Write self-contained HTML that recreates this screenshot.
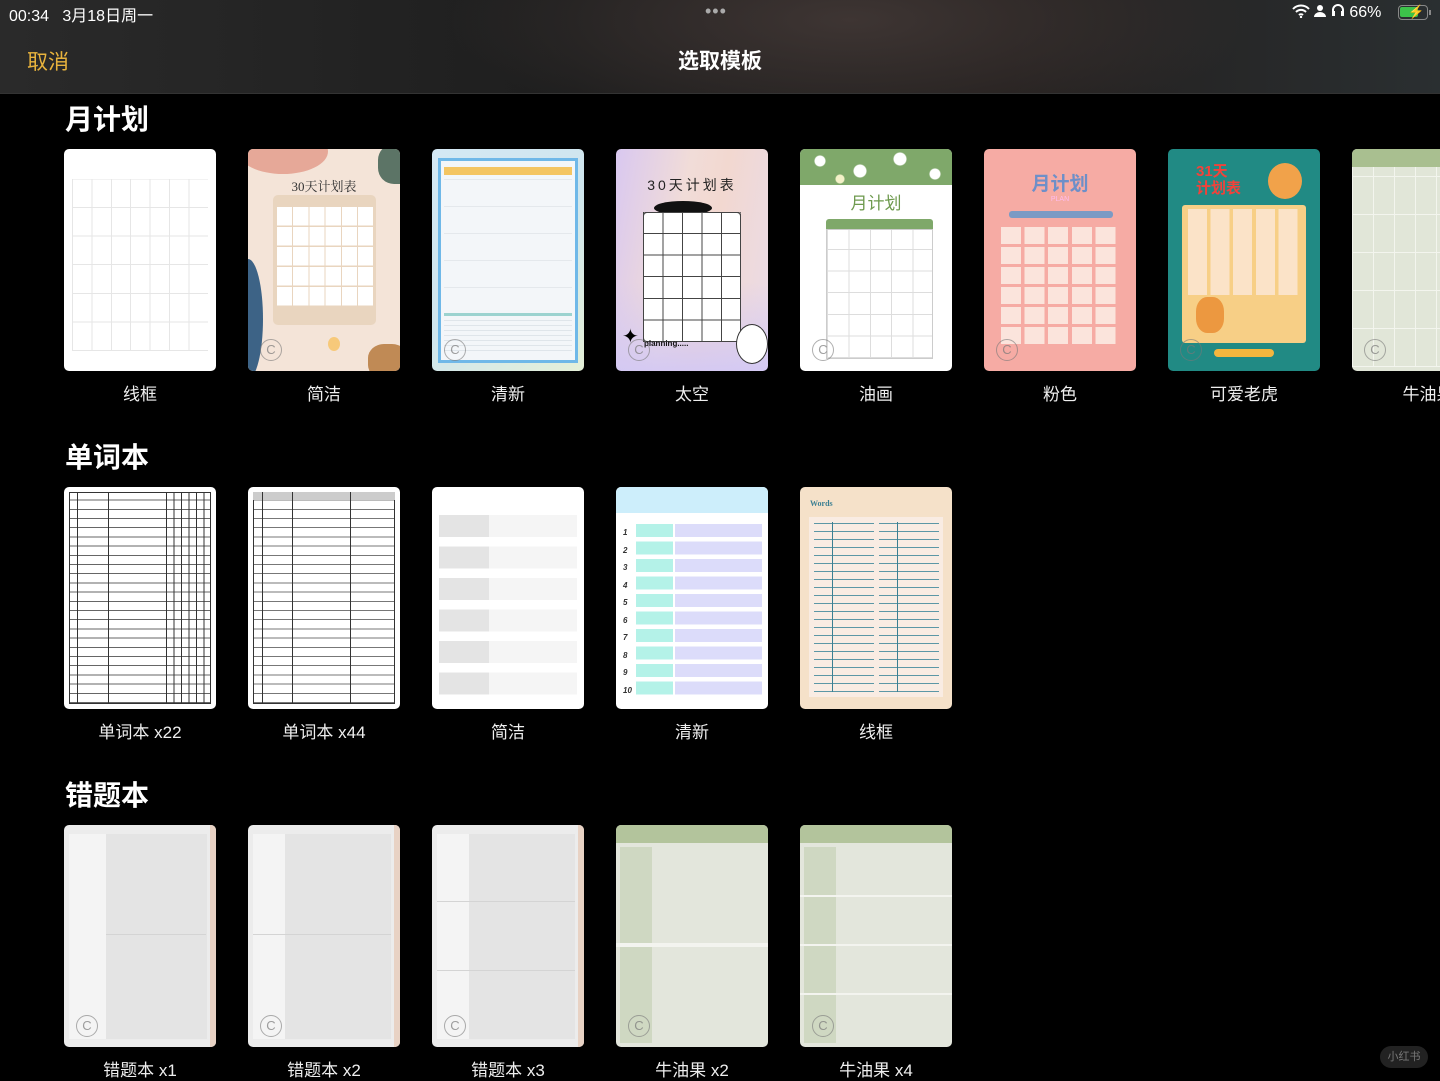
<!DOCTYPE html>
<html><head><meta charset="utf-8"><style>
*{margin:0;padding:0;box-sizing:border-box}
body{width:1440px;height:1080px;background:#000;overflow:hidden;position:relative;font-family:"Liberation Sans","Noto Sans CJK SC",sans-serif;color:#fff}
.hdr{position:absolute;left:0;top:0;width:1440px;height:94px;background:radial-gradient(ellipse 400px 120px at 850px 20px,#3e3533,transparent),linear-gradient(90deg,#2a2a2a,#1e1e1e 40%,#231f1e 70%,#2a2f31);border-bottom:1px solid #333}
.abs{position:absolute}
.sec{position:absolute;left:65px;font-size:28px;font-weight:bold}
.card{position:absolute;width:152px;height:222px;border-radius:5px;overflow:hidden}
.lbl{position:absolute;width:184px;text-align:center;font-size:17px;color:#eee}
.cp{position:absolute;left:12px;bottom:10px;width:22px;height:22px;border:1.5px solid rgba(120,120,120,.6);border-radius:50%;font-size:13px;line-height:19px;text-align:center;color:rgba(120,120,120,.7)}
.grid{position:absolute}
</style></head><body>
<div class="hdr"></div>
<div class="abs" style="left:9px;top:2px;font-size:16px">00:34&nbsp;&nbsp;&nbsp;3月18日周一</div>
<div class="abs" style="left:705px;top:1px;font-size:18px;letter-spacing:1px;color:#aaa">•••</div>
<div class="abs" style="left:1292px;top:3px;font-size:16px">
<svg width="18" height="14" viewBox="0 0 18 14" style="vertical-align:-1px"><path d="M1 5a11 11 0 0 1 16 0M4 8a7 7 0 0 1 10 0M7 11a3 3 0 0 1 4 0" stroke="#fff" stroke-width="2" fill="none"/><circle cx="9" cy="13" r="1.2" fill="#fff"/></svg>
<svg width="12" height="13" viewBox="0 0 12 13"><circle cx="6" cy="4" r="3" fill="#fff"/><path d="M0 13a6 5 0 0 1 12 0z" fill="#fff"/></svg>
<svg width="14" height="14" viewBox="0 0 14 14"><path d="M2 12V7a5 5 0 0 1 10 0v5" stroke="#fff" stroke-width="2" fill="none"/><rect x="1" y="8" width="3" height="5" fill="#fff"/><rect x="10" y="8" width="3" height="5" fill="#fff"/></svg>
 66%</div>
<div class="abs" style="left:1398px;top:5px;width:30px;height:15px;border:1.5px solid #888;border-radius:4px"><div style="position:absolute;left:1px;top:1px;width:18px;height:10px;background:#3cc24a;border-radius:2px"></div><div style="position:absolute;left:9px;top:-2px;font-size:13px;color:#fff;font-weight:bold">⚡</div></div>
<div class="abs" style="left:1429px;top:10px;width:2px;height:5px;background:#888"></div>
<div class="abs" style="left:27px;top:46px;font-size:21px;color:#e8b33d">取消</div>
<div class="abs" style="left:0;width:1440px;top:45px;text-align:center;font-size:21px;font-weight:bold">选取模板</div>

<div class="sec" style="top:98px">月计划</div>
<div class="sec" style="top:436px">单词本</div>
<div class="sec" style="top:774px">错题本</div>

<!-- Row 1 -->
<div class="card" style="left:64px;top:149px;background:#fff">
<div class="grid" style="left:8px;top:30px;width:136px;height:172px;background:repeating-linear-gradient(90deg,#e6e6e6 0 1px,transparent 1px 19.4px),repeating-linear-gradient(0deg,#e6e6e6 0 1px,transparent 1px 28.6px)"></div></div>
<div class="card" style="left:248px;top:149px;background:#f4e4d8">
<div class="abs" style="left:-10px;top:-20px;width:90px;height:45px;border-radius:50%;background:#e6a898"></div>
<div class="abs" style="left:130px;top:-5px;width:40px;height:40px;border-radius:40%;background:#5c7466"></div>
<div class="abs" style="left:-15px;top:110px;width:30px;height:120px;border-radius:50%;background:#3d6386"></div>
<div class="abs" style="left:120px;top:195px;width:40px;height:35px;border-radius:40%;background:#c08a55"></div>
<div class="abs" style="left:0;width:152px;top:27px;text-align:center;font-family:'Liberation Serif','Noto Serif CJK SC',serif;font-size:13px;color:#333">30天计划表</div>
<div class="abs" style="left:25px;top:46px;width:103px;height:130px;background:#e9d5bf;border-radius:5px"></div>
<div class="abs" style="left:28px;top:58px;width:97px;height:100px;background:repeating-linear-gradient(90deg,#e9d5bf 0 1px,#fff 1px 16.2px),#fff"></div>
<div class="abs" style="left:28px;top:58px;width:97px;height:100px;background:repeating-linear-gradient(0deg,#e9d5bf 0 1.5px,transparent 1.5px 20px)"></div>
<div class="abs" style="left:80px;top:188px;width:12px;height:14px;border-radius:50%;background:#f7c97a"></div>
<div class="cp">C</div></div>
<div class="card" style="left:432px;top:149px;background:linear-gradient(135deg,#d4e8f4,#cfe6ee 50%,#e5f0d8)">
<div class="abs" style="left:6px;top:9px;width:140px;height:205px;border:3px solid #6fb8e8;background:#f3f6f9"></div>
<div class="abs" style="left:12px;top:18px;width:128px;height:8px;background:#f4c562"></div>
<div class="abs" style="left:12px;top:26px;width:128px;height:140px;background:repeating-linear-gradient(0deg,#e4e8ec 0 1px,transparent 1px 27px)"></div>
<div class="abs" style="left:12px;top:164px;width:128px;height:3px;background:#9cd3d0"></div>
<div class="abs" style="left:12px;top:168px;width:128px;height:34px;background:repeating-linear-gradient(0deg,#dfe5ea 0 1px,transparent 1px 5px)"></div>
<div class="cp">C</div></div>
<div class="card" style="left:616px;top:149px;background:linear-gradient(180deg,transparent 60%,rgba(210,200,245,.9)),linear-gradient(100deg,#d9c8f0,#f1dcd8 40%,#f2d8d0 60%,#eadbe8);">
<div class="abs" style="left:0;width:152px;top:26px;text-align:center;font-size:14px;color:#222;letter-spacing:3px">30天计划表</div>
<div class="abs" style="left:38px;top:52px;width:58px;height:14px;border-radius:50%;background:#111"></div>
<div class="abs" style="left:27px;top:63px;width:98px;height:130px;background:#fff;border:1px solid #444;border-radius:4px"></div>
<div class="abs" style="left:27px;top:63px;width:98px;height:130px;background:repeating-linear-gradient(90deg,#444 0 1px,transparent 1px 19.5px),repeating-linear-gradient(0deg,#444 0 1px,transparent 1px 21.6px)"></div>
<div class="abs" style="left:120px;top:175px;width:32px;height:40px;border-radius:50%;background:#fff;border:1px solid #333"></div>
<div class="abs" style="left:28px;top:190px;font-size:8px;color:#111;font-weight:bold">planning.....</div>
<div class="abs" style="left:6px;top:175px;font-size:20px;color:#000">✦</div>
<div class="cp">C</div></div>
<div class="card" style="left:800px;top:149px;background:#fff">
<div class="abs" style="left:0;top:0;width:152px;height:36px;background:radial-gradient(circle at 20px 12px,#fff 5px,transparent 6px),radial-gradient(circle at 60px 22px,#fff 6px,transparent 7px),radial-gradient(circle at 100px 10px,#fff 6px,transparent 7px),radial-gradient(circle at 135px 25px,#fff 5px,transparent 6px),radial-gradient(circle at 40px 30px,#f4f1c8 4px,transparent 5px),#7fa86a"></div>
<div class="abs" style="left:0;width:152px;top:40px;text-align:center;font-size:17px;color:#6e9a4e">月计划</div>
<div class="abs" style="left:26px;top:70px;width:107px;height:10px;background:#7fa86a;border-radius:3px 3px 0 0"></div>
<div class="abs" style="left:26px;top:80px;width:107px;height:130px;border:1px solid #ccc;background:repeating-linear-gradient(90deg,#ddd 0 1px,transparent 1px 21.4px),repeating-linear-gradient(0deg,#ddd 0 1px,transparent 1px 21.6px)"></div>
<div class="cp">C</div></div>
<div class="card" style="left:984px;top:149px;background:#f6aba4">
<div class="abs" style="left:0;width:152px;top:20px;text-align:center;font-size:19px;color:#6e8fc8;font-weight:bold">月计划</div>
<div class="abs" style="left:0;width:152px;top:47px;text-align:center;font-size:7px;color:#fbe">PLAN</div>
<div class="abs" style="left:25px;top:62px;width:104px;height:7px;border-radius:3px;background:#7b9ac4"></div>
<div class="abs" style="left:17px;top:75px;width:118px;height:120px;background:repeating-linear-gradient(90deg,#fbe4dc 0 20px,transparent 20px 23.6px),repeating-linear-gradient(0deg,transparent 0 3px,#f6aba4 3px 4px)"></div>
<div class="abs" style="left:17px;top:75px;width:118px;height:120px;background:repeating-linear-gradient(0deg,transparent 0 17px,#f6aba4 17px 20px)"></div>
<div class="cp">C</div></div>
<div class="card" style="left:1168px;top:149px;background:#218a84">
<div class="abs" style="left:28px;top:14px;font-size:15px;line-height:17px;color:#f2423a;font-weight:bold">31天<br>计划表</div>
<div class="abs" style="left:100px;top:14px;width:34px;height:36px;border-radius:50%;background:#f1a24a"></div>
<div class="abs" style="left:14px;top:56px;width:124px;height:138px;background:#f7cf86;border-radius:3px"></div>
<div class="abs" style="left:20px;top:60px;width:112px;height:86px;background:repeating-linear-gradient(90deg,#fbe3c8 0 19px,transparent 19px 22.6px),repeating-linear-gradient(0deg,transparent 0 13px,#f7cf86 13px 16px)"></div>
<div class="abs" style="left:28px;top:148px;width:28px;height:36px;border-radius:40%;background:#ec9840"></div>
<div class="abs" style="left:46px;top:200px;width:60px;height:8px;border-radius:4px;background:#f5b63e"></div>
<div class="cp">C</div></div>
<div class="card" style="left:1352px;top:149px;background:#e1e6d8">
<div class="abs" style="left:0;top:0;width:152px;height:18px;background:#a9bf90"></div>
<div class="abs" style="left:0;top:18px;width:152px;height:200px;background:repeating-linear-gradient(90deg,#f3f5ee 0 1px,transparent 1px 21px),repeating-linear-gradient(0deg,#f3f5ee 0 1px,transparent 1px 38px)"></div>
<div class="cp">C</div></div>

<div class="lbl" style="left:48px;top:380px">线框</div>
<div class="lbl" style="left:232px;top:380px">简洁</div>
<div class="lbl" style="left:416px;top:380px">清新</div>
<div class="lbl" style="left:600px;top:380px">太空</div>
<div class="lbl" style="left:784px;top:380px">油画</div>
<div class="lbl" style="left:968px;top:380px">粉色</div>
<div class="lbl" style="left:1152px;top:380px">可爱老虎</div>
<div class="lbl" style="left:1336px;top:380px">牛油果</div>

<!-- Row 2 -->
<div class="card" style="left:64px;top:487px;background:#fff">
<div class="abs" style="left:5px;top:5px;width:142px;height:212px;border:1px solid #333;background:repeating-linear-gradient(0deg,#666 0 1px,transparent 1px 9.2px)"></div>
<div class="abs" style="left:13px;top:5px;width:1px;height:212px;background:#333"></div>
<div class="abs" style="left:44px;top:5px;width:1px;height:212px;background:#333"></div>
<div class="abs" style="left:102px;top:5px;width:45px;height:212px;background:repeating-linear-gradient(90deg,#333 0 1px,transparent 1px 7.5px)"></div>
</div>
<div class="card" style="left:248px;top:487px;background:#fff">
<div class="abs" style="left:5px;top:5px;width:142px;height:212px;border:1px solid #333;background:repeating-linear-gradient(0deg,#777 0 1px,transparent 1px 9.2px)"></div>
<div class="abs" style="left:5px;top:5px;width:142px;height:8px;background:#ccc"></div>
<div class="abs" style="left:14px;top:5px;width:1px;height:212px;background:#333"></div>
<div class="abs" style="left:44px;top:5px;width:1px;height:212px;background:#333"></div>
<div class="abs" style="left:102px;top:5px;width:1px;height:212px;background:#333"></div>
</div>
<div class="card" style="left:432px;top:487px;background:#fff">
<div class="abs" style="left:7px;top:28px;width:50px;height:180px;background:repeating-linear-gradient(180deg,#e4e4e4 0 22px,transparent 22px 31.5px)"></div>
<div class="abs" style="left:57px;top:28px;width:88px;height:180px;background:repeating-linear-gradient(180deg,#f5f5f5 0 22px,transparent 22px 31.5px)"></div>
</div>
<div class="card" style="left:616px;top:487px;background:#fff">
<div class="abs" style="left:0;top:0;width:152px;height:26px;background:#cdeefb"></div>
<div class="abs" style="left:20px;top:37px;width:37px;height:175px;background:repeating-linear-gradient(180deg,#b4f2e8 0 13px,transparent 13px 17.5px)"></div>
<div class="abs" style="left:59px;top:37px;width:87px;height:175px;background:repeating-linear-gradient(180deg,#dcdcfa 0 13px,transparent 13px 17.5px)"></div>
<div class="abs" style="left:7px;top:37px;font-size:8px;line-height:17.5px;font-style:italic;color:#333;font-weight:bold">1<br>2<br>3<br>4<br>5<br>6<br>7<br>8<br>9<br>10</div>
</div>
<div class="card" style="left:800px;top:487px;background:#f5e1c9">
<div class="abs" style="left:10px;top:12px;font-family:'Liberation Serif',serif;font-size:8px;color:#3b7f92;font-weight:bold">Words</div>
<div class="abs" style="left:9px;top:30px;width:134px;height:180px;background:#f9ece3"></div>
<div class="abs" style="left:14px;top:35px;width:60px;height:170px;background:repeating-linear-gradient(0deg,#5c97a6 0 1px,transparent 1px 8px)"></div>
<div class="abs" style="left:79px;top:35px;width:60px;height:170px;background:repeating-linear-gradient(0deg,#5c97a6 0 1px,transparent 1px 8px)"></div>
<div class="abs" style="left:32px;top:35px;width:1px;height:170px;background:#3b7f92"></div>
<div class="abs" style="left:97px;top:35px;width:1px;height:170px;background:#3b7f92"></div>
</div>

<div class="lbl" style="left:48px;top:718px">单词本 x22</div>
<div class="lbl" style="left:232px;top:718px">单词本 x44</div>
<div class="lbl" style="left:416px;top:718px">简洁</div>
<div class="lbl" style="left:600px;top:718px">清新</div>
<div class="lbl" style="left:784px;top:718px">线框</div>

<!-- Row 3 -->
<div class="card" style="left:64px;top:825px;background:#ececec">
<div class="abs" style="left:5px;top:9px;width:138px;height:205px;background:#e4e4e4"></div>
<div class="abs" style="left:5px;top:9px;width:37px;height:205px;background:#f4f4f4"></div>
<div class="abs" style="left:42px;top:109px;width:100px;height:1px;background:#d4d4d4"></div>
<div class="abs" style="left:146px;top:0;width:6px;height:222px;background:#e8d2c4"></div>
<div class="cp">C</div></div>
<div class="card" style="left:248px;top:825px;background:#ececec">
<div class="abs" style="left:5px;top:9px;width:138px;height:205px;background:#e4e4e4"></div>
<div class="abs" style="left:5px;top:9px;width:32px;height:205px;background:#f4f4f4"></div>
<div class="abs" style="left:5px;top:109px;width:138px;height:1px;background:#d4d4d4"></div>
<div class="abs" style="left:146px;top:0;width:6px;height:222px;background:#e8d2c4"></div>
<div class="cp">C</div></div>
<div class="card" style="left:432px;top:825px;background:#ececec">
<div class="abs" style="left:5px;top:9px;width:138px;height:205px;background:#e4e4e4"></div>
<div class="abs" style="left:5px;top:9px;width:32px;height:205px;background:#f4f4f4"></div>
<div class="abs" style="left:5px;top:76px;width:138px;height:1px;background:#d4d4d4"></div>
<div class="abs" style="left:5px;top:145px;width:138px;height:1px;background:#d4d4d4"></div>
<div class="abs" style="left:146px;top:0;width:6px;height:222px;background:#e8d2c4"></div>
<div class="cp">C</div></div>
<div class="card" style="left:616px;top:825px;background:#e3e6dc">
<div class="abs" style="left:0;top:0;width:152px;height:18px;background:#b3c49c"></div>
<div class="abs" style="left:4px;top:22px;width:32px;height:196px;background:#cfd8c2"></div>
<div class="abs" style="left:0;top:118px;width:152px;height:4px;background:#f3f4ef"></div>
<div class="cp">C</div></div>
<div class="card" style="left:800px;top:825px;background:#e3e6dc">
<div class="abs" style="left:0;top:0;width:152px;height:18px;background:#b3c49c"></div>
<div class="abs" style="left:4px;top:22px;width:32px;height:196px;background:#cfd8c2"></div>
<div class="abs" style="left:0;top:70px;width:152px;height:2px;background:#f3f4ef"></div>
<div class="abs" style="left:0;top:119px;width:152px;height:2px;background:#f3f4ef"></div>
<div class="abs" style="left:0;top:168px;width:152px;height:2px;background:#f3f4ef"></div>
<div class="cp">C</div></div>

<div class="lbl" style="left:48px;top:1056px">错题本 x1</div>
<div class="lbl" style="left:232px;top:1056px">错题本 x2</div>
<div class="lbl" style="left:416px;top:1056px">错题本 x3</div>
<div class="lbl" style="left:600px;top:1056px">牛油果 x2</div>
<div class="lbl" style="left:784px;top:1056px">牛油果 x4</div>
<div class="abs" style="left:1380px;top:1046px;width:48px;height:22px;border-radius:11px;background:#222;color:#777;font-size:11px;text-align:center;line-height:22px">小红书</div>
</body></html>
